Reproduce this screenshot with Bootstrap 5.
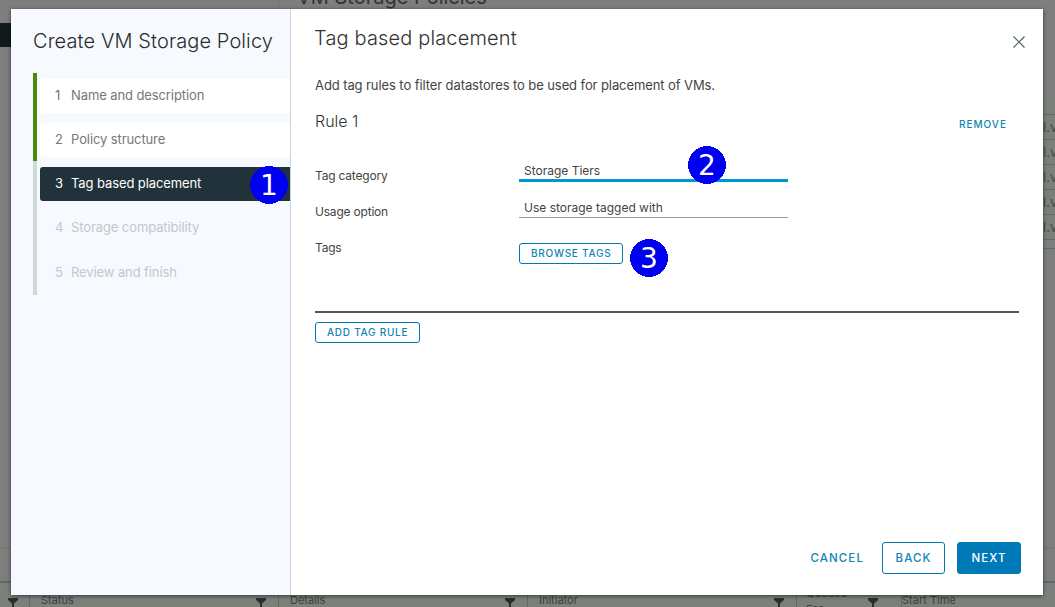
<!DOCTYPE html>
<html lang="en">

<head>
  <meta charset="UTF-8">
  <meta name="viewport" content="width=device-width, initial-scale=1.0" />
  <title>Create VM Storage Policy</title>
  <link href="https://cdn.jsdelivr.net/npm/bootstrap@5.3.0/dist/css/bootstrap.min.css" rel="stylesheet">
  <style>
    html, body {
      height: 100%;
      overflow: hidden;
    }

    body {
      background: #7e7e7e;
      font-family: Inter, "Liberation Sans", sans-serif;
      font-size: 13px;
      color: #4a4a4a;
    }

    /* page behind the dialog */
    .back-page {
      width: 1055px;
      height: 607px;
      overflow: hidden;
    }

    .back-top {
      height: 92px;
    }

    .back-side {
      width: 278px;
      padding-top: 23px;
    }

    .back-bar {
      width: 100%;
      height: 24px;
      background: #111b1b;
    }

    .back-main {
      border-left: 1px solid #747474;
      padding-left: 18px;
    }

    .back-title {
      margin-top: -15px;
      font-size: 20px;
      line-height: 24px;
      color: #333;
    }

    .back-rows {
      background: #7b807b;
      height: 158px;
      margin-left: 278px;
    }

    .back-row {
      height: 25px;
      border-bottom: 1px solid #646a64;
      padding-left: 765px;
      line-height: 24px;
      color: #454a45;
      white-space: nowrap;
    }

    .back-row.is-head {
      height: 23px;
    }

    .back-row.is-tail {
      height: 9px;
    }

    .back-gap {
      height: 297px;
    }

    .back-line {
      height: 34px;
      border-top: 2px solid #747a74;
    }

    .back-head {
      height: 26px;
      background: #7a807a;
      border-top: 2px solid #5f6a66;
      color: #3e423e;
      font-size: 11px;
      line-height: 24px;
    }

    .back-cell {
      display: flex;
      justify-content: space-between;
      flex: none;
      padding: 5px 12px 0 11px;
      border-right: 1px solid #656a65;
    }

    .back-cell svg {
      margin-top: 10px;
    }

    .cell-check { width: 30px; padding: 5px 0 0 8px; }
    .cell-wide { width: 249px; }
    .cell-wide-b { width: 269px; }
    .cell-for { width: 105px; padding: 5px 23px 0 9px; }

    .cell-last {
      border-right: 0;
      padding-left: 0;
    }

    .queued-text {
      line-height: 16px;
      margin-top: -3px;
    }

    /* the wizard */
    .wizard-box {
      position: absolute;
      left: 11px;
      top: 9px;
      width: 1032px;
      height: 586px;
      background: #fff;
      box-shadow: 0 1px 4px rgba(0, 0, 0, .55);
    }

    .wizard-side {
      width: 280px;
      flex: none;
      background: #f6faff;
      border-right: 1px solid #c9d6df;
      padding: 18px 0 0 22px;
    }

    .wizard-title {
      font-size: 20px;
      font-weight: 300;
      letter-spacing: .1px;
      line-height: 28px;
      color: #2b2b2b;
      margin: 0 0 18px;
      white-space: nowrap;
    }

    .step-list {
      height: 222px;
      border-left: 4px solid #d0d9da;
      position: relative;
      padding: 6px 0 0 3px;
    }

    .step-done-bar {
      position: absolute;
      left: -4px;
      top: 0;
      width: 4px;
      height: 88px;
      background: #4a8a0a;
    }

    .step-item {
      display: flex;
      height: 34px;
      align-items: center;
      padding-left: 15px;
      margin-bottom: 10px;
      letter-spacing: -.1px;
      color: #777;
    }

    .step-item span:first-child {
      width: 16px;
    }

    .step-item.is-done {
      background: #fff;
      border-radius: 3px 0 0 3px;
    }

    .step-item.is-current {
      background: #22323b;
      color: #fff;
      border-radius: 3px 0 0 3px;
    }

    .step-item.is-next {
      color: #bfc9cc;
    }

    .step-item.is-last {
      margin-top: 11px;
    }

    .wizard-main {
      padding: 15px 24px 21px 24px;
      min-width: 0;
    }

    .main-title {
      font-size: 20px;
      font-weight: 300;
      letter-spacing: .15px;
      line-height: 28px;
      color: #333;
      margin: 0 0 0 -1px;
    }

    .close-x {
      margin: 12px -6px 0 0;
      padding: 0;
      border: 0;
      background: none;
      line-height: 0;
    }

    .main-desc {
      margin: 23px 0 16px;
      line-height: 20px;
      letter-spacing: -.09px;
      color: #444;
    }

    .rule-title {
      font-size: 16px;
      font-weight: 300;
      line-height: 20px;
      color: #333;
      margin: 0;
    }

    .remove-link {
      margin: 3px 12px 0 0;
      font-size: 10px;
      font-weight: 500;
      letter-spacing: 1px;
      line-height: 20px;
      color: #0f85b5;
      text-decoration: none;
    }

    .rule-form {
      margin-top: 24px;
    }

    .rule-row {
      height: 36px;
    }

    .rule-label {
      width: 204px;
      flex: none;
      font-size: 12px;
      letter-spacing: -.2px;
      line-height: 36px;
      color: #444;
    }

    .rule-input.form-control {
      width: 269px;
      margin-top: 3px;
      height: 21px;
      min-height: 0;
      padding: 0 5px;
      font-size: 12px;
      color: #444;
      border: 0;
      border-bottom: 1px solid #9a9a9a;
      border-radius: 0;
      background: transparent;
    }

    .rule-input.is-active {
      border-bottom: 3px solid #0095d3;
    }

    .ghost-btn.btn {
      height: 21px;
      padding: 0 11px;
      font-size: 10px;
      font-weight: 500;
      letter-spacing: .75px;
      line-height: 19px;
      color: #0f85b5;
      border: 1px solid #0079b8;
      border-radius: 3px;
      background: #fff;
      margin-top: 13px;
    }

    .rule-rule {
      height: 2px;
      margin: 45px 0 9px;
      background: #565656;
      opacity: 1;
      border: 0;
    }

    .ghost-btn.add-btn {
      margin-top: 0;
      align-self: flex-start;
    }

    .wizard-foot {
      margin-right: -2px;
    }

    .foot-btn.btn {
      height: 32px;
      width: 63px;
      padding: 0;
      font-size: 11.5px;
      font-weight: 500;
      letter-spacing: 1.1px;
      line-height: 30px;
      border: 1px solid #0079b8;
      border-radius: 3px;
      color: #0f85b5;
      background: #fff;
    }

    .foot-btn.is-flat {
      width: auto;
      border-color: transparent;
      margin-right: 9px;
    }

    .foot-btn.is-solid {
      width: 64px;
      background: #0079b8;
      color: #fff;
    }

    /* numbered callouts drawn over the screenshot */
    .callout {
      position: absolute;
      width: 38px;
      height: 38px;
    }

    .callout-one { left: 250px; top: 166px; }
    .callout-two { left: 688px; top: 146px; }
    .callout-three { left: 630px; top: 239px; }

    .callout text {
      font-family: "DejaVu Sans", sans-serif;
      font-size: 28px;
      fill: #fff;
    }
  </style>
</head>

<body>
  <div class="back-page">
    <div class="back-top d-flex">
      <div class="back-side">
        <div class="back-bar"></div>
      </div>
      <div class="back-main flex-grow-1">
        <div class="back-title">VM Storage Policies</div>
      </div>
    </div>
    <div class="back-rows">
      <div class="back-row is-head"></div>
      <div class="back-row">l.v</div>
      <div class="back-row">l.v</div>
      <div class="back-row">l.v</div>
      <div class="back-row">l.v</div>
      <div class="back-row">l.v</div>
      <div class="back-row is-tail"></div>
    </div>
    <div class="back-gap"></div>
    <div class="back-line"></div>
    <div class="back-head d-flex">
      <div class="back-cell cell-check">
        <svg width="10" height="11" viewBox="0 0 10 11"><path d="M0 0h10v2L6 5.500V11H4V5.500L0 2z" fill="#2c2f2c"/></svg>
      </div>
      <div class="back-cell cell-wide">Status
        <svg width="10" height="11" viewBox="0 0 10 11"><path d="M0 0h10v2L6 5.500V11H4V5.500L0 2z" fill="#2c2f2c"/></svg>
      </div>
      <div class="back-cell cell-wide">Details
        <svg width="10" height="11" viewBox="0 0 10 11"><path d="M0 0h10v2L6 5.500V11H4V5.500L0 2z" fill="#2c2f2c"/></svg>
      </div>
      <div class="back-cell cell-wide-b">Initiator
        <svg width="10" height="11" viewBox="0 0 10 11"><path d="M0 0h10v2L6 5.500V11H4V5.500L0 2z" fill="#2c2f2c"/></svg>
      </div>
      <div class="back-cell cell-for">
        <div class="queued-text">Queued<br>For</div>
        <svg width="10" height="11" viewBox="0 0 10 11"><path d="M0 0h10v2L6 5.500V11H4V5.500L0 2z" fill="#2c2f2c"/></svg>
      </div>
      <div class="back-cell cell-last">Start Time</div>
    </div>
  </div>

  <div class="wizard-box d-flex">
    <div class="wizard-side">
      <h3 class="wizard-title">Create VM Storage Policy</h3>
      <div class="step-list">
        <div class="step-done-bar"></div>
        <div class="step-item is-done"><span>1</span><span>Name and description</span></div>
        <div class="step-item is-done"><span>2</span><span>Policy structure</span></div>
        <div class="step-item is-current"><span>3</span><span>Tag based placement</span></div>
        <div class="step-item is-next"><span>4</span><span>Storage compatibility</span></div>
        <div class="step-item is-next is-last"><span>5</span><span>Review and finish</span></div>
      </div>
    </div>

    <div class="wizard-main d-flex flex-column flex-grow-1">
      <div class="d-flex justify-content-between align-items-start">
        <h3 class="main-title">Tag based placement</h3>
        <button class="close-x" type="button" aria-label="Close">
          <svg width="12" height="12" viewBox="0 0 12 12"><path d="M.5.5l11 11M11.500.5l-11 11" stroke="#4f6068" stroke-width="1.200" fill="none"/></svg>
        </button>
      </div>
      <p class="main-desc">Add tag rules to filter datastores to be used for placement of VMs.</p>
      <div class="d-flex justify-content-between">
        <h4 class="rule-title">Rule 1</h4>
        <a class="remove-link" href="#">REMOVE</a>
      </div>
      <div class="rule-form">
        <div class="rule-row d-flex">
          <label class="rule-label">Tag category</label>
          <input class="form-control rule-input is-active" type="text" value="Storage Tiers" readonly>
        </div>
        <div class="rule-row d-flex">
          <label class="rule-label">Usage option</label>
          <input class="form-control rule-input" type="text" value="Use storage tagged with" readonly>
        </div>
        <div class="rule-row d-flex">
          <label class="rule-label">Tags</label>
          <button class="btn ghost-btn" type="button">BROWSE TAGS</button>
        </div>
      </div>
      <hr class="rule-rule">
      <button class="btn ghost-btn add-btn" type="button">ADD TAG RULE</button>
      <div class="wizard-foot d-flex justify-content-end align-items-center gap-2 mt-auto">
        <button class="btn foot-btn is-flat" type="button">CANCEL</button>
        <button class="btn foot-btn" type="button">BACK</button>
        <button class="btn foot-btn is-solid ms-1" type="button">NEXT</button>
      </div>
    </div>
  </div>

  <svg class="callout callout-one" viewBox="0 0 38 38"><circle cx="19" cy="19" r="19" fill="#0000f0" shape-rendering="crispEdges"/><text x="19" y="29" text-anchor="middle">1</text></svg>
  <svg class="callout callout-two" viewBox="0 0 38 38"><circle cx="19" cy="19" r="19" fill="#0000f0" shape-rendering="crispEdges"/><text x="19" y="29" text-anchor="middle">2</text></svg>
  <svg class="callout callout-three" viewBox="0 0 38 38"><circle cx="19" cy="19" r="19" fill="#0000f0" shape-rendering="crispEdges"/><text x="19" y="29" text-anchor="middle">3</text></svg>

  <script src="https://cdn.jsdelivr.net/npm/bootstrap@5.3.0/dist/js/bootstrap.bundle.min.js"></script>
</body>

</html>
